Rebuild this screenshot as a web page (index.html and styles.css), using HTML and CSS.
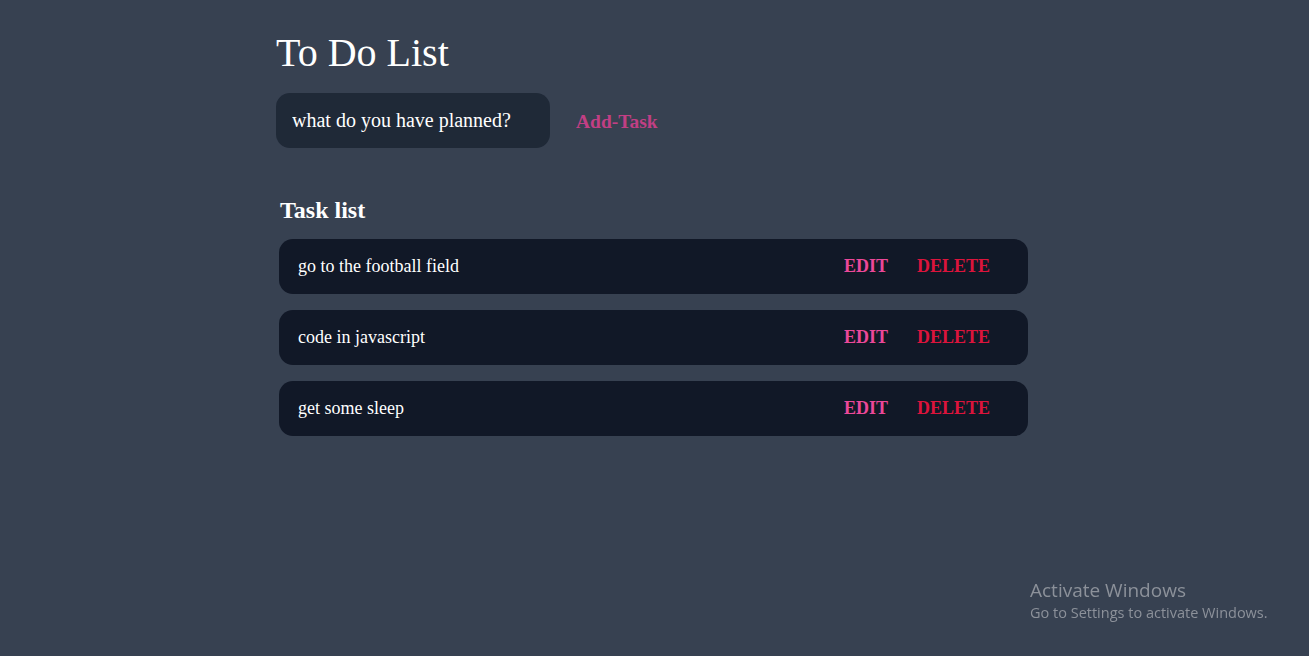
FILE: index.html
```html
<!DOCTYPE html>
<html>
<head>
<meta charset="utf-8">
<link rel="stylesheet" href="styles.css">
</head>
<body>
<main class="app">
  <h1 class="title">To Do List</h1>
  <form class="add-form">
    <input class="task-input" type="text" placeholder="what do you have planned?">
    <button class="add-btn" type="button">Add-Task</button>
  </form>
  <section class="tasks">
    <h2 class="tasks-title">Task list</h2>
    <div class="task">
      <span class="task-text">go to the football field</span>
      <div class="actions"><button class="edit">EDIT</button><button class="delete">DELETE</button></div>
    </div>
    <div class="task">
      <span class="task-text">code in javascript</span>
      <div class="actions"><button class="edit">EDIT</button><button class="delete">DELETE</button></div>
    </div>
    <div class="task">
      <span class="task-text">get some sleep</span>
      <div class="actions"><button class="edit">EDIT</button><button class="delete">DELETE</button></div>
    </div>
  </section>
</main>
<div class="activate">
  <div class="activate-title">Activate Windows</div>
  <div class="activate-sub">Go to Settings to activate Windows.</div>
</div>
</body>
</html>
```
FILE: styles.css
```css
html, body {
  margin: 0;
  padding: 0;
  background: #374151;
  height: 100%;
}
body {
  font-family: "Liberation Serif", "Times New Roman", serif;
  color: #ffffff;
}
.app {
  width: 754px;
  margin-left: 276px;
  padding-top: 30px;
}
.title {
  margin: 0;
  font-size: 40px;
  font-weight: normal;
  line-height: 46px;
  color: #fff;
}
.add-form {
  display: flex;
  align-items: center;
  margin-top: 17px;
}
.task-input {
  width: 274px;
  height: 55px;
  box-sizing: border-box;
  border: none;
  border-radius: 14px;
  background: #1f2937;
  padding: 0 16px;
  font-family: "Liberation Serif", serif;
  font-size: 20px;
  color: #fff;
  outline: none;
}
.task-input::placeholder {
  color: #ffffff;
  opacity: 1;
}
.add-btn {
  background: none;
  border: none;
  margin-left: 26px;
  margin-top: 2px;
  padding: 0;
  font-family: "Liberation Serif", serif;
  font-weight: bold;
  font-size: 19.5px;
  color: #c13f84;
  cursor: pointer;
}
.tasks {
  margin-top: 48px;
  padding-left: 3px;
}
.tasks-title {
  margin: 0 0 15px 1px;
  font-size: 24px;
  line-height: 28px;
  font-weight: bold;
}
.task {
  display: flex;
  align-items: center;
  justify-content: space-between;
  width: 749px;
  height: 55px;
  box-sizing: border-box;
  background: #111827;
  border-radius: 14px;
  padding: 0 38px 0 19px;
  margin-bottom: 16px;
}
.task-text {
  font-size: 18px;
  color: #fff;
}
.actions {
  display: flex;
  gap: 29px;
}
.actions button {
  background: none;
  border: none;
  padding: 0;
  font-family: "Liberation Serif", serif;
  font-weight: bold;
  font-size: 18px;
  cursor: pointer;
}
.edit { color: #ec4899; }
.delete { color: #dc143c; }
.activate {
  position: fixed;
  left: 1030px;
  top: 578px;
  font-family: "Open Sans", "Noto Sans", sans-serif;
  color: #8c919a;
}
.activate-title {
  font-size: 19px;
  line-height: 25px;
}
.activate-sub {
  font-size: 14.5px;
  line-height: 20px;
}
```
